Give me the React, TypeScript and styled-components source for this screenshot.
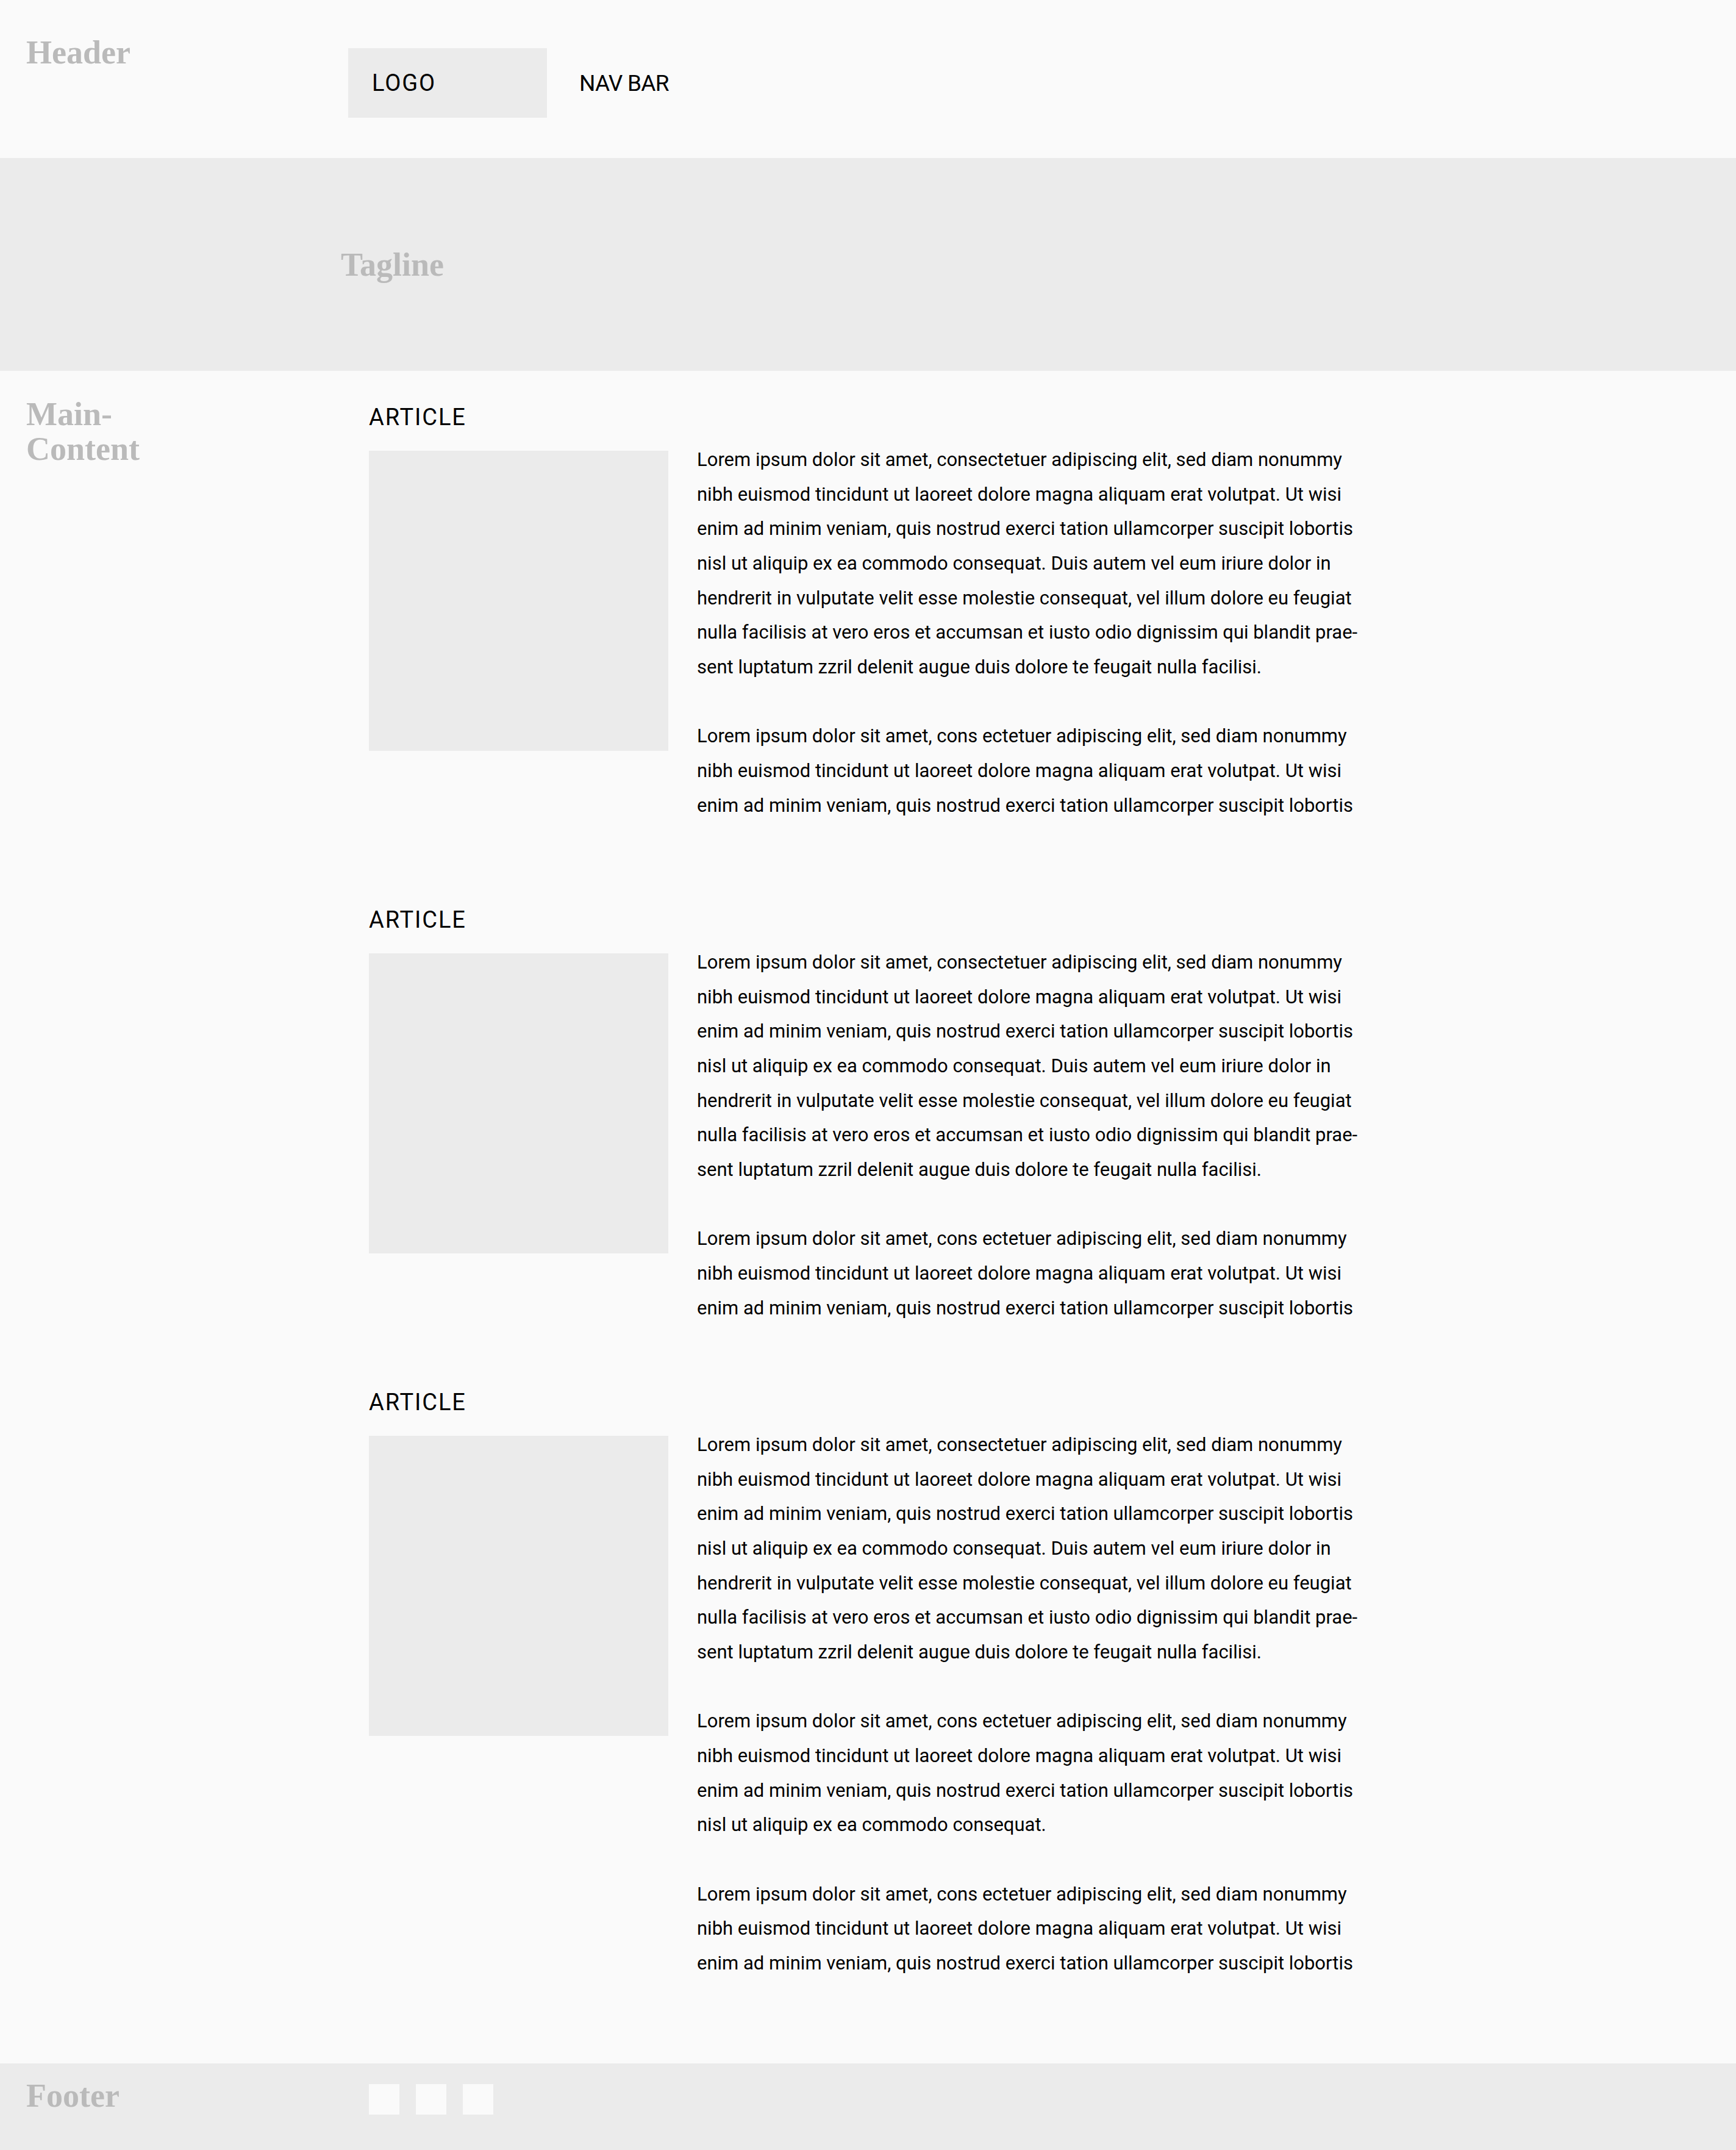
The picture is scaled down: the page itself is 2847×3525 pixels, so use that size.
import React from "react";
import styled, { createGlobalStyle } from "styled-components";

const GlobalStyle = createGlobalStyle`
  html, body {
    margin: 0;
    padding: 0;
    background: #fafafa;
  }
  * { box-sizing: border-box; }
`;

const Page = styled.div`
  width: 2847px;
  background: #fafafa;
  color: #000;
  font-family: Roboto, "Open Sans", sans-serif;
`;

const SectionLabel = styled.h2<{ $width?: number; $lh?: number }>`
  margin: 0;
  flex: none;
  width: ${(p) => (p.$width ? `${p.$width}px` : "auto")};
  font-family: "Liberation Serif", "DejaVu Serif", serif;
  font-weight: 700;
  font-size: 54px;
  line-height: ${(p) => (p.$lh ? `${p.$lh}px` : "1")};
  color: #bababa;
`;

const HeaderBar = styled.header`
  display: flex;
  align-items: flex-start;
  height: 259px;
  padding: 59px 0 0 43px;
`;

const Logo = styled.div`
  display: flex;
  align-items: center;
  width: 326px;
  height: 114px;
  margin-top: 20px;
  padding-left: 39px;
  background: #ebebeb;
  font-size: 38px;
  letter-spacing: 0.05em;
`;

const NavBar = styled.nav`
  display: flex;
  align-items: center;
  height: 114px;
  margin-top: 20px;
  margin-left: 53px;
  font-size: 37px;
  letter-spacing: -0.02em;
`;

const TaglineBand = styled.section`
  display: flex;
  align-items: center;
  height: 349px;
  padding-left: 559px;
  background: #ebebeb;
`;

const Main = styled.main`
  display: grid;
  grid-template-columns: 562px 1fr;
  padding: 43px 0 135px 43px;
`;

const ContentColumn = styled.div`
  display: flex;
  flex-direction: column;
  padding-top: 9px;
`;

const Article = styled.article<{ $gap: number }>`
  display: flex;
  flex-direction: column;
  margin-top: ${(p) => p.$gap}px;
`;

const ArticleTitle = styled.h3`
  margin: 0 0 17.4px;
  font-weight: 400;
  font-size: 38px;
  line-height: 48.6px;
  letter-spacing: 0.05em;
`;

const ArticleRow = styled.div`
  display: flex;
  align-items: flex-start;
  gap: 47px;
`;

const ImagePlaceholder = styled.div`
  flex: none;
  width: 491px;
  height: 492px;
  margin-top: 13px;
  background: #ebebeb;
`;

const TextColumn = styled.div`
  display: flex;
  flex-direction: column;
  gap: 56.67px;
`;

const Paragraph = styled.p`
  margin: 0;
  font-size: 31px;
  line-height: 56.67px;
  white-space: nowrap;
`;

const Line = styled.span`
  display: block;
`;

const FooterBar = styled.footer`
  display: grid;
  grid-template-columns: 562px 1fr;
  height: 142px;
  padding: 26px 0 0 43px;
  background: #ebebeb;
`;

const Socials = styled.div`
  display: flex;
  gap: 27px;
  margin-top: 8px;
`;

const SocialSquare = styled.span`
  width: 50px;
  height: 50px;
  background: #fafafa;
`;

const paraA = [
  "Lorem ipsum dolor sit amet, consectetuer adipiscing elit, sed diam nonummy",
  "nibh euismod tincidunt ut laoreet dolore magna aliquam erat volutpat. Ut wisi",
  "enim ad minim veniam, quis nostrud exerci tation ullamcorper suscipit lobortis",
  "nisl ut aliquip ex ea commodo consequat. Duis autem vel eum iriure dolor in",
  "hendrerit in vulputate velit esse molestie consequat, vel illum dolore eu feugiat",
  "nulla facilisis at vero eros et accumsan et iusto odio dignissim qui blandit prae-",
  "sent luptatum zzril delenit augue duis dolore te feugait nulla facilisi.",
];

const paraB = [
  "Lorem ipsum dolor sit amet, cons ectetuer adipiscing elit, sed diam nonummy",
  "nibh euismod tincidunt ut laoreet dolore magna aliquam erat volutpat. Ut wisi",
  "enim ad minim veniam, quis nostrud exerci tation ullamcorper suscipit lobortis",
];

const paraC = [...paraB, "nisl ut aliquip ex ea commodo consequat."];

const articles: { gap: number; paragraphs: string[][] }[] = [
  { gap: 0, paragraphs: [paraA, paraB] },
  { gap: 134.7, paragraphs: [paraA, paraB] },
  { gap: 101.6, paragraphs: [paraA, paraC, paraB] },
];

export default function App() {
  return (
    <Page>
      <GlobalStyle />
      <HeaderBar>
        <SectionLabel $width={528}>Header</SectionLabel>
        <Logo>LOGO</Logo>
        <NavBar>NAV BAR</NavBar>
      </HeaderBar>
      <TaglineBand>
        <SectionLabel>Tagline</SectionLabel>
      </TaglineBand>
      <Main>
        <SectionLabel $width={280} $lh={57}>
          Main-Content
        </SectionLabel>
        <ContentColumn>
          {articles.map((a, i) => (
            <Article key={i} $gap={a.gap}>
              <ArticleTitle>ARTICLE</ArticleTitle>
              <ArticleRow>
                <ImagePlaceholder />
                <TextColumn>
                  {a.paragraphs.map((p, j) => (
                    <Paragraph key={j}>
                      {p.map((l, k) => (
                        <Line key={k}>{l}</Line>
                      ))}
                    </Paragraph>
                  ))}
                </TextColumn>
              </ArticleRow>
            </Article>
          ))}
        </ContentColumn>
      </Main>
      <FooterBar>
        <SectionLabel>Footer</SectionLabel>
        <Socials>
          <SocialSquare />
          <SocialSquare />
          <SocialSquare />
        </Socials>
      </FooterBar>
    </Page>
  );
}
